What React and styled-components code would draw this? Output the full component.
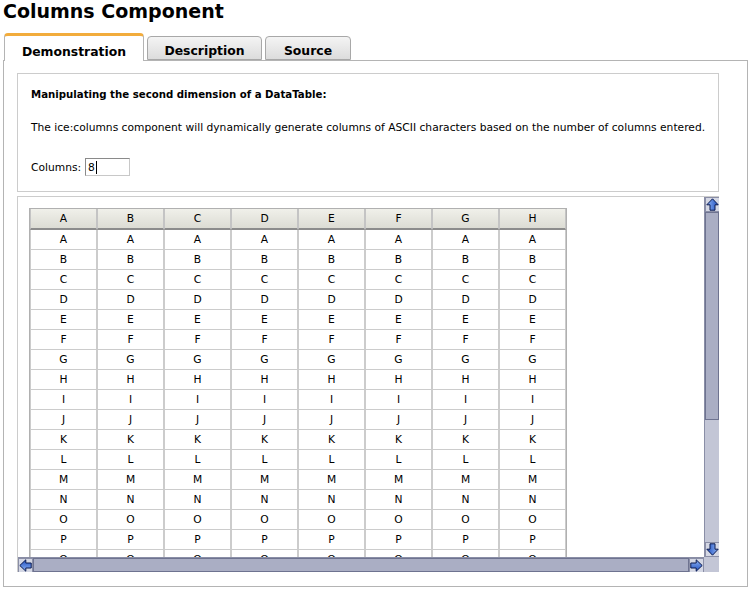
import React from "react";
import styled, { createGlobalStyle } from "styled-components";

const GlobalStyle = createGlobalStyle`
  html, body {
    margin: 0;
    padding: 0;
    background: #ffffff;
  }
  body {
    font-family: "DejaVu Sans", Verdana, sans-serif;
    font-size: 10.7px;
    color: #000;
  }
`;

const Page = styled.div`
  width: 751px;
  height: 593px;
  padding: 0 3px;
  box-sizing: border-box;
  overflow: hidden;
`;

const Title = styled.h1`
  margin: 0;
  height: 32px;
  font-size: 19px;
  font-weight: bold;
  line-height: 22px;
`;

const TabBar = styled.div`
  display: flex;
  align-items: flex-end;
  height: 28px;
  padding-left: 1px;
  border-bottom: 1px solid #b4b4b4;
`;

const Tab = styled.div`
  box-sizing: border-box;
  display: flex;
  align-items: center;
  justify-content: center;
  font-weight: bold;
  font-size: 12.4px;
  margin-right: 3px;
  border-radius: 4px 4px 0 0;
  width: ${(p) => p.$w}px;
  height: ${(p) => (p.$active ? 28 : 24)}px;
  margin-bottom: ${(p) => (p.$active ? -1 : 0)}px;
  background: ${(p) =>
    p.$active ? "#ffffff" : "linear-gradient(#f4f4f4, #dcdcdc)"};
  border: 1px solid ${(p) => (p.$active ? "#b4b4b4" : "#a8a8a8")};
  border-top: ${(p) => (p.$active ? "3px solid #f2ac3c" : "1px solid #a8a8a8")};
  border-bottom: ${(p) => (p.$active ? "none" : "1px solid #a8a8a8")};
  padding-top: ${(p) => (p.$active ? 5 : 5)}px;
`;

const Panel = styled.div`
  box-sizing: border-box;
  border: 1px solid #b4b4b4;
  border-top: none;
  padding: 12px 28px 14px 13px;
  display: flex;
  flex-direction: column;
  gap: 4px;
`;

const InfoBox = styled.div`
  border: 1px solid #cccccc;
  height: 119px;
  box-sizing: border-box;
  padding: 14px 14px 0 13px;
`;

const Heading = styled.div`
  font-weight: bold;
  font-size: 10.2px;
  line-height: 13px;
  margin-bottom: 20px;
`;

const Para = styled.div`
  line-height: 13px;
  margin-bottom: 24px;
  white-space: nowrap;
`;

const FieldRow = styled.div`
  display: flex;
  align-items: center;
  gap: 4px;
`;

const NumInput = styled.div`
  width: 45px;
  height: 18px;
  box-sizing: border-box;
  border: 1px solid #8a8a8a;
  border-right-color: #c8c8c8;
  border-bottom-color: #c8c8c8;
  padding-left: 2px;
  display: flex;
  align-items: center;
`;

const Caret = styled.span`
  display: inline-block;
  width: 1px;
  height: 13px;
  background: #000;
  margin-left: 1px;
`;

const ScrollBox = styled.div`
  height: 376px;
  box-sizing: border-box;
  border: 1px solid #cccccc;
  border-right: none;
  border-bottom: none;
  display: grid;
  grid-template-columns: 1fr 15px;
  grid-template-rows: 1fr 15px;
  overflow: hidden;
`;

const Viewport = styled.div`
  overflow: hidden;
  padding: 11px 0 0 11px;
`;

const Grid = styled.table`
  border-collapse: separate;
  border-spacing: 0;
  border: 1px solid #b0b0b0;
  border-bottom: none;
  table-layout: fixed;
`;

const HeadCell = styled.th`
  width: 65px;
  height: 19px;
  padding: 0;
  font-weight: normal;
  font-size: 10.7px;
  background: linear-gradient(#f0f0ea, #dcdcd4);
  border-left: 1px solid #c4c4c4;
  border-right: 1px solid #c4c4c4;
  border-bottom: 2px solid #8c8c8c;
`;

const Cell = styled.td`
  height: 19px;
  padding: 0;
  text-align: center;
  font-size: 10.7px;
  border-left: 1px solid #cccccc;
  border-right: 1px solid #cccccc;
  border-bottom: 1px solid #cccccc;
`;

const Track = styled.div`
  background: #c3c6d6;
  display: flex;
  flex-direction: ${(p) => (p.$vertical ? "column" : "row")};
  border-left: ${(p) => (p.$vertical ? "1px solid #8a8ea6" : "none")};
  border-top: ${(p) => (p.$vertical ? "none" : "1px solid #8a8ea6")};
`;

const Thumb = styled.div`
  background: #aaaec4;
  border: 1px solid #6e7390;
  box-sizing: border-box;
  ${(p) => (p.$vertical ? `height: ${p.$size}px;` : "flex: 1;")}
`;

const Spacer = styled.div`
  flex: 1;
`;

const ArrowBtn = styled.div`
  width: 15px;
  height: 15px;
  flex: none;
  box-sizing: border-box;
  background: #d4d7e4;
  border: 1px solid #8a8ea6;
  display: flex;
  align-items: center;
  justify-content: center;
`;

const Corner = styled.div`
  background: #c3c6d6;
`;

const Arrow = ({ rot }) => (
  <svg width="13" height="13" viewBox="0 0 13 13" style={{ transform: `rotate(${rot}deg)` }}>
    <defs>
      <linearGradient id={`g${rot}`} x1="0" y1="0" x2="1" y2="0">
        <stop offset="0" stopColor="#8fb4f4" />
        <stop offset="1" stopColor="#1f4fc0" />
      </linearGradient>
    </defs>
    <polygon
      points="6.5,0.8 12.2,6.8 9,6.8 9,12.2 4,12.2 4,6.8 0.8,6.8"
      fill={`url(#g${rot})`}
      stroke="#0a1a50"
      strokeWidth="1"
      strokeLinejoin="round"
    />
  </svg>
);

const letters = "ABCDEFGHIJKLMNOPQRSTUVWXYZ".split("");
const cols = letters.slice(0, 8);

export default function App() {
  return (
    <Page>
      <GlobalStyle />
      <Title>Columns Component</Title>
      <TabBar>
        <Tab $active $w={140}>Demonstration</Tab>
        <Tab $w={115}>Description</Tab>
        <Tab $w={86}>Source</Tab>
      </TabBar>
      <Panel>
        <InfoBox>
          <Heading>Manipulating the second dimension of a DataTable:</Heading>
          <Para>
            The ice:columns component will dynamically generate columns of ASCII characters based on the number of columns entered.
          </Para>
          <FieldRow>
            Columns:
            <NumInput>
              8<Caret />
            </NumInput>
          </FieldRow>
        </InfoBox>
        <ScrollBox>
          <Viewport>
            <Grid>
              <thead>
                <tr>
                  {cols.map((c) => (
                    <HeadCell key={c}>{c}</HeadCell>
                  ))}
                </tr>
              </thead>
              <tbody>
                {letters.map((r) => (
                  <tr key={r}>
                    {cols.map((c) => (
                      <Cell key={c}>{r}</Cell>
                    ))}
                  </tr>
                ))}
              </tbody>
            </Grid>
          </Viewport>
          <Track $vertical>
            <ArrowBtn>
              <Arrow rot={0} />
            </ArrowBtn>
            <Thumb $vertical $size={208} />
            <Spacer />
            <ArrowBtn>
              <Arrow rot={180} />
            </ArrowBtn>
          </Track>
          <Track>
            <ArrowBtn>
              <Arrow rot={270} />
            </ArrowBtn>
            <Thumb />
            <ArrowBtn>
              <Arrow rot={90} />
            </ArrowBtn>
          </Track>
          <Corner />
        </ScrollBox>
      </Panel>
    </Page>
  );
}
